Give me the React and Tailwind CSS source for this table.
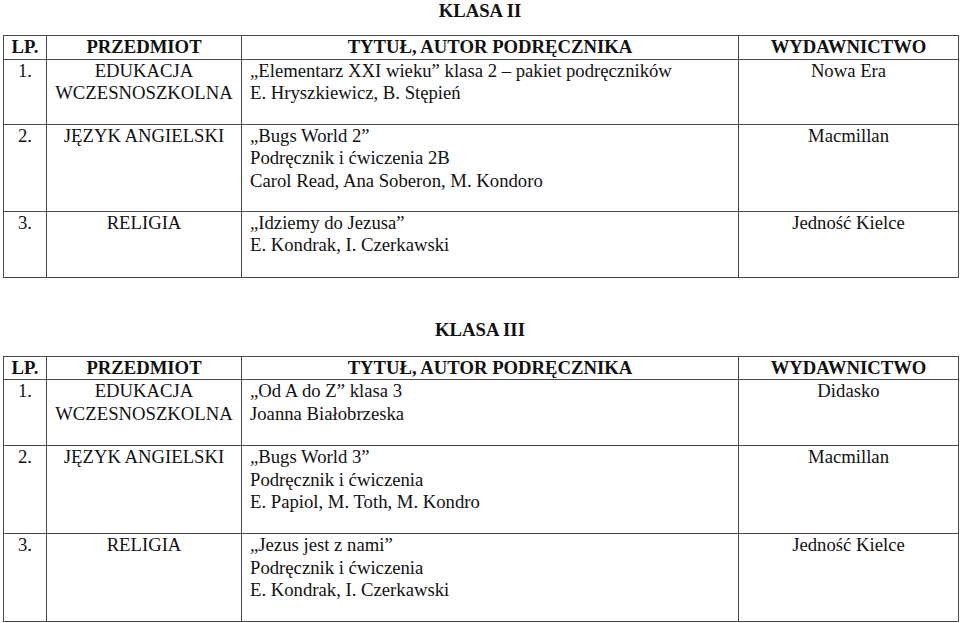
const KLASA_II = [
  {
    lp: '1.',
    subject: ['EDUKACJA', 'WCZESNOSZKOLNA'],
    book: ['„Elementarz XXI wieku” klasa 2 – pakiet podręczników', 'E. Hryszkiewicz, B. Stępień'],
    publisher: 'Nowa Era',
    h: 'h-[65px]',
  },
  {
    lp: '2.',
    subject: ['JĘZYK ANGIELSKI'],
    book: ['„Bugs World 2”', 'Podręcznik i ćwiczenia 2B', 'Carol Read, Ana Soberon, M. Kondoro'],
    publisher: 'Macmillan',
    h: 'h-[87px]',
  },
  {
    lp: '3.',
    subject: ['RELIGIA'],
    book: ['„Idziemy do Jezusa”', 'E. Kondrak, I. Czerkawski'],
    publisher: 'Jedność Kielce',
    h: 'h-[66px]',
  },
]

const KLASA_III = [
  {
    lp: '1.',
    subject: ['EDUKACJA', 'WCZESNOSZKOLNA'],
    book: ['„Od A do Z” klasa 3', 'Joanna Białobrzeska'],
    publisher: 'Didasko',
    h: 'h-[66px]',
  },
  {
    lp: '2.',
    subject: ['JĘZYK ANGIELSKI'],
    book: ['„Bugs World 3”', 'Podręcznik i ćwiczenia', 'E. Papiol, M. Toth, M. Kondro'],
    publisher: 'Macmillan',
    h: 'h-[88px]',
  },
  {
    lp: '3.',
    subject: ['RELIGIA'],
    book: ['„Jezus jest z nami”', 'Podręcznik i ćwiczenia', 'E. Kondrak, I. Czerkawski'],
    publisher: 'Jedność Kielce',
    h: 'h-[88px]',
  },
]

function Lines({ items }) {
  return items.map((t) => <div key={t}>{t}</div>)
}

function BookTable({ rows }) {
  const cell = 'border border-[#4a4a4a] align-top p-0'
  return (
    <table className="ml-[3px] w-[955px] table-fixed border-collapse">
      <colgroup>
        <col className="w-[43px]" />
        <col className="w-[195px]" />
        <col className="w-[497px]" />
        <col className="w-[220px]" />
      </colgroup>
      <thead>
        <tr className="h-[22px] font-bold">
          <th className={`${cell} text-center`}>LP.</th>
          <th className={`${cell} text-center`}>PRZEDMIOT</th>
          <th className={`${cell} text-center`}>TYTUŁ, AUTOR PODRĘCZNIKA</th>
          <th className={`${cell} text-center`}>WYDAWNICTWO</th>
        </tr>
      </thead>
      <tbody>
        {rows.map((r) => (
          <tr key={r.lp} className={r.h}>
            <td className={`${cell} text-center`}>{r.lp}</td>
            <td className={`${cell} text-center`}>
              <Lines items={r.subject} />
            </td>
            <td className={`${cell} pl-[8px] text-left whitespace-nowrap`}>
              <Lines items={r.book} />
            </td>
            <td className={`${cell} text-center`}>{r.publisher}</td>
          </tr>
        ))}
      </tbody>
    </table>
  )
}

export default function App() {
  return (
    <div className="w-[960px] h-[623px] overflow-hidden bg-white text-[#111] font-[family-name:'Liberation_Serif','Times_New_Roman',serif] text-[18.7px] leading-[22.5px]">
      <h2 className="text-center font-bold leading-[21px] mb-[14px]">KLASA II</h2>
      <BookTable rows={KLASA_II} />
      <h2 className="text-center font-bold leading-[22px] mt-[41px] mb-[15px]">KLASA III</h2>
      <BookTable rows={KLASA_III} />
    </div>
  )
}
